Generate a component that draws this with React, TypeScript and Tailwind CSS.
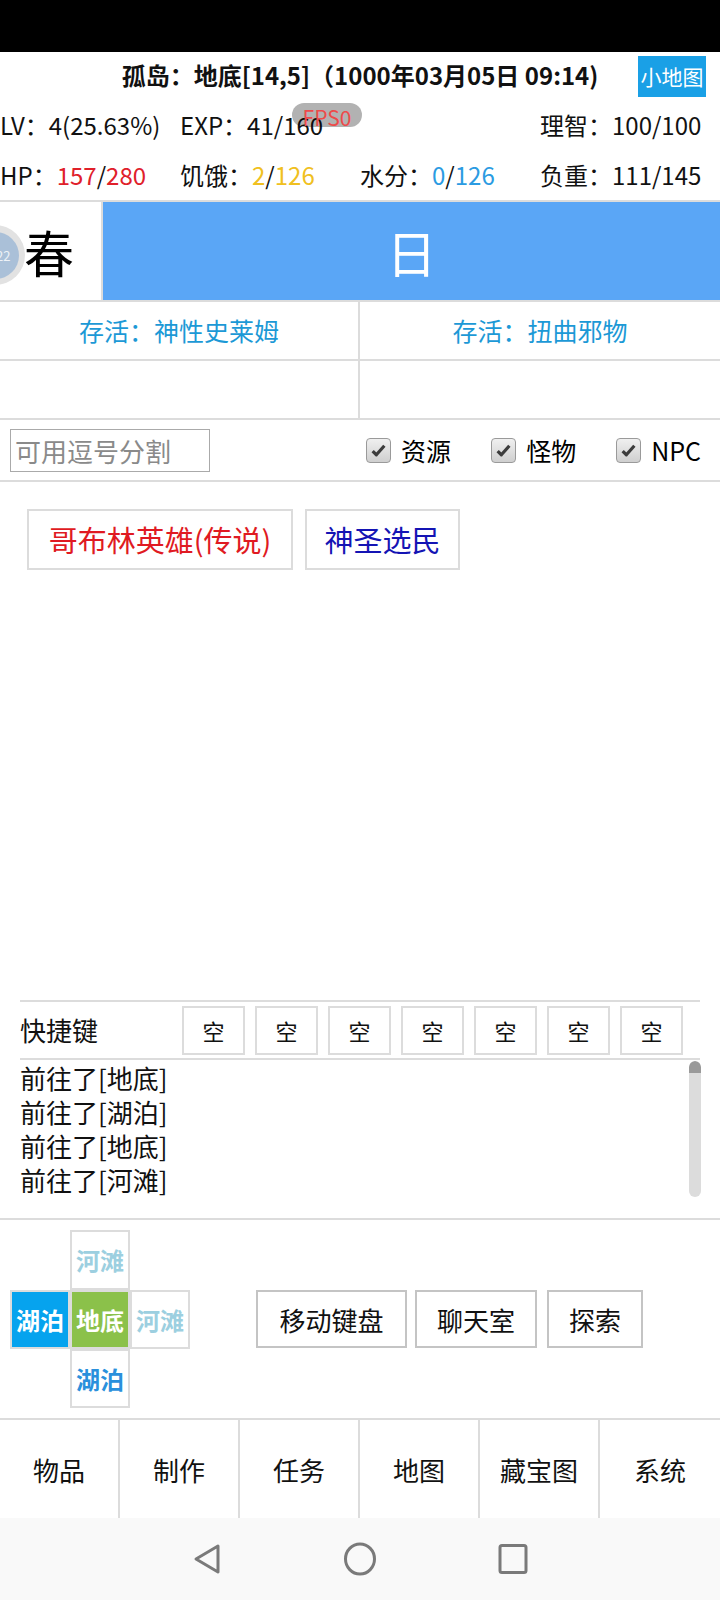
import React from "react";

const font = { fontFamily: '"Noto Sans CJK SC", "Noto Sans", sans-serif' };

const Check = ({ label }: { label: string }) => (
    <div className="flex items-center gap-[10px]">
        <div className="w-[25px] h-[25px] rounded-[4px] border border-[#9a9a9a] bg-gradient-to-b from-[#f0f0f0] to-[#cfcfcf] flex items-center justify-center">
            <svg width="17" height="17" viewBox="0 0 16 16">
                <path d="M2.5 8.5 L6 12 L13.5 3.5" stroke="#3c3c3c" strokeWidth="3" fill="none" strokeLinejoin="round" />
            </svg>
        </div>
        <span className="text-[25px] text-black leading-none">{label}</span>
    </div>
);

const navItems = ["物品", "制作", "任务", "地图", "藏宝图", "系统"];
const logs = ["前往了[地底]", "前往了[湖泊]", "前往了[地底]", "前往了[河滩]"];

export default function App() {
    return (
        <div className="w-[720px] h-[1600px] flex flex-col bg-white overflow-hidden" style={font}>
            {/* status bar */}
            <div className="h-[52px] bg-black shrink-0" />

            {/* title */}
            <div className="h-[48px] flex items-center shrink-0">
                <div className="w-[82px]" />
                <div className="flex-1 text-center text-[24px] font-bold text-[#111] leading-none whitespace-nowrap mb-[3px]">
                    孤岛：地底[14,5]（1000年03月05日 09:14)
                </div>
                <div className="w-[68px] h-[41px] mr-[14px] bg-[#1aa0e6] text-white text-[21px] flex items-center justify-center leading-none whitespace-nowrap">
                    小地图
                </div>
            </div>

            {/* stats */}
            <div className="relative h-[50px] grid grid-cols-[180px_180px_180px_180px] items-center text-[24px] text-[#111] leading-none shrink-0 whitespace-nowrap">
                <span>LV：4(25.63%)</span>
                <span>EXP：41/160</span>
                <span />
                <span>理智：100/100</span>
                <div className="absolute left-[292px] top-[3px] w-[70px] h-[24px] rounded-full bg-black/30 flex items-start justify-center">
                    <span className="text-[21px] text-[#ee4a4a] leading-none mt-[4px]">FPS0</span>
                </div>
            </div>
            <div className="h-[50px] grid grid-cols-[180px_180px_180px_180px] items-center text-[24px] text-[#111] leading-none shrink-0 whitespace-nowrap">
                <span>
                    HP：<span className="text-[#e0202a]">157</span>/<span className="text-[#e0202a]">280</span>
                </span>
                <span>
                    饥饿：<span className="text-[#f0c020]">2</span>/<span className="text-[#f0c020]">126</span>
                </span>
                <span>
                    水分：<span className="text-[#2b9be2]">0</span>/<span className="text-[#2b9be2]">126</span>
                </span>
                <span>负重：111/145</span>
            </div>

            {/* season / day */}
            <div className="h-[100px] flex border-t-2 border-[#dcdcdc] shrink-0">
                <div className="relative w-[101px] overflow-hidden flex items-center bg-white">
                    <div className="absolute left-[-35px] top-[23px] w-[60px] h-[60px] rounded-full bg-[#e2e2e2] flex items-center justify-center">
                        <div className="w-[47px] h-[47px] rounded-full bg-[#aac0d8] flex items-center justify-end pr-[8px]">
                            <span className="text-[13px] text-white/80 leading-none">22</span>
                        </div>
                    </div>
                    <span className="ml-[24px] text-[50px] leading-none text-black">春</span>
                </div>
                <div className="w-[2px] bg-[#dcdcdc]" />
                <div className="flex-1 bg-[#5aa6f6] flex items-center justify-center">
                    <span className="text-[50px] text-white leading-none">日</span>
                </div>
            </div>

            {/* survival grid */}
            <div className="grid grid-cols-2 border-t-2 border-[#dcdcdc] shrink-0">
                <div className="h-[59px] border-b-2 border-r-2 border-[#dcdcdc] flex items-center justify-center text-[25px] text-[#1c99d6]">
                    存活：神性史莱姆
                </div>
                <div className="h-[59px] border-b-2 border-[#dcdcdc] flex items-center justify-center text-[25px] text-[#1c99d6]">
                    存活：扭曲邪物
                </div>
                <div className="h-[59px] border-b-2 border-r-2 border-[#dcdcdc]" />
                <div className="h-[59px] border-b-2 border-[#dcdcdc]" />
            </div>

            {/* filter */}
            <div className="h-[62px] flex items-center border-b-2 border-[#dcdcdc] shrink-0">
                <div className="ml-[10px] w-[200px] h-[43px] border border-[#aaa] flex items-center px-[4px] text-[26px] text-[#8a8a8a] whitespace-nowrap overflow-hidden">
                    可用逗号分割
                </div>
                <div className="ml-auto mr-[19px] flex items-center gap-[40px]">
                    <Check label="资源" />
                    <Check label="怪物" />
                    <Check label="NPC" />
                </div>
            </div>

            {/* targets */}
            <div className="flex-1 pt-[27px] px-[27px] flex items-start gap-[12px]">
                <div className="w-[266px] h-[61px] border-2 border-[#dcdcdc] flex items-center justify-center text-[29px] text-[#e01a22] whitespace-nowrap">
                    哥布林英雄(传说)
                </div>
                <div className="w-[155px] h-[61px] border-2 border-[#dcdcdc] flex items-center justify-center text-[29px] text-[#1414b4] whitespace-nowrap">
                    神圣选民
                </div>
            </div>

            {/* shortcuts + log */}
            <div className="mx-[20px] border-t-2 border-[#dcdcdc] shrink-0">
                <div className="h-[58px] flex items-center border-b-2 border-[#dcdcdc]">
                    <span className="text-[26px] text-[#111] w-[162px] leading-none">快捷键</span>
                    <div className="flex gap-[10px]">
                        {Array.from({ length: 7 }).map((_, i) => (
                            <div
                                key={i}
                                className="w-[63px] h-[49px] border-2 border-[#dcdcdc] flex items-center justify-center text-[22px] text-[#111]"
                            >
                                空
                            </div>
                        ))}
                    </div>
                </div>
                <div className="h-[138px] flex">
                    <div className="flex-1 pt-[1px]">
                        {logs.map((l, i) => (
                            <div key={i} className="text-[26px] leading-[34px] text-[#111]">
                                {l}
                            </div>
                        ))}
                    </div>
                    <div className="w-[12px] mr-[-1px] mt-[1px] h-[136px] rounded-full bg-[#dcdcdc] overflow-hidden">
                        <div className="h-[12px] bg-[#9a9a9a] rounded-t-full" />
                    </div>
                </div>
            </div>

            {/* move area */}
            <div className="mt-[20px] h-[200px] border-t-2 border-[#dcdcdc] flex items-center shrink-0">
                <div className="ml-[10px] grid grid-cols-[60px_60px_60px] grid-rows-[60px_59px_59px]">
                    <div />
                    <div className="border-2 border-[#dcdcdc] flex items-center justify-center text-[24px] font-bold text-[#9ccfe0]">
                        河滩
                    </div>
                    <div />
                    <div className="border-2 border-[#dcdcdc] bg-[#06a3ee] flex items-center justify-center text-[24px] font-bold text-white">
                        湖泊
                    </div>
                    <div className="border-2 border-[#dcdcdc] bg-[#8bc14a] flex items-center justify-center text-[24px] font-bold text-white">
                        地底
                    </div>
                    <div className="border-2 border-[#dcdcdc] flex items-center justify-center text-[24px] font-bold text-[#9ccfe0]">
                        河滩
                    </div>
                    <div />
                    <div className="border-2 border-[#dcdcdc] flex items-center justify-center text-[24px] font-bold text-[#2a90dc]">
                        湖泊
                    </div>
                    <div />
                </div>
                <div className="ml-[66px] flex items-center">
                    <div className="w-[151px] h-[58px] border-2 border-[#c4c4c4] flex items-center justify-center text-[26px] text-[#111] whitespace-nowrap">
                        移动键盘
                    </div>
                    <div className="ml-[8px] w-[122px] h-[58px] border-2 border-[#c4c4c4] flex items-center justify-center text-[26px] text-[#111] whitespace-nowrap">
                        聊天室
                    </div>
                    <div className="ml-[10px] w-[96px] h-[58px] border-2 border-[#c4c4c4] flex items-center justify-center text-[26px] text-[#111] whitespace-nowrap">
                        探索
                    </div>
                </div>
            </div>

            {/* bottom nav */}
            <div className="h-[100px] border-t-2 border-[#dcdcdc] grid grid-cols-6 shrink-0">
                {navItems.map((n, i) => (
                    <div
                        key={n}
                        className={`flex items-center justify-center text-[26px] text-[#111] ${i < 5 ? "border-r-2 border-[#dcdcdc]" : ""}`}
                    >
                        {n}
                    </div>
                ))}
            </div>

            {/* system nav */}
            <div className="flex-none h-[82px] bg-[#f9f9f9] flex items-center justify-center gap-[120px]">
                <svg width="32" height="32" viewBox="0 0 32 32">
                    <path d="M27 3 L5 16 L27 29 Z" fill="none" stroke="#7a7a7a" strokeWidth="3" strokeLinejoin="round" />
                </svg>
                <svg width="34" height="34" viewBox="0 0 34 34">
                    <ellipse cx="17" cy="17" rx="14.5" ry="15" fill="none" stroke="#7a7a7a" strokeWidth="3" />
                </svg>
                <svg width="32" height="32" viewBox="0 0 32 32">
                    <rect x="3" y="2.5" width="26" height="27" rx="2" fill="none" stroke="#7a7a7a" strokeWidth="3" />
                </svg>
            </div>
        </div>
    );
}
